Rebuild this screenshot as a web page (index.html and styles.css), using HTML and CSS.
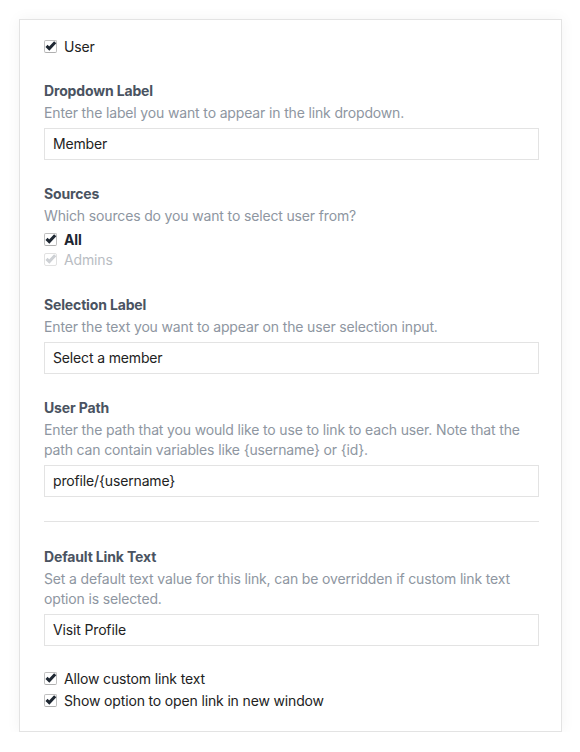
FILE: index.html
```html
<!DOCTYPE html>
<html>
<head>
<meta charset="utf-8">
<link rel="stylesheet" href="styles.css">
</head>
<body>
<div class="card">
  <label class="check top">
    <span class="box"><svg viewBox="0 0 13 13" width="13" height="13"><path d="M2.5 5.8 L5.3 8.5 L11.2 2.3" /></svg></span>
    <span>User</span>
  </label>

  <div class="field first">
    <div class="title">Dropdown Label</div>
    <div class="desc">Enter the label you want to appear in the link dropdown.</div>
    <div class="input">Member</div>
  </div>

  <div class="field">
    <div class="title">Sources</div>
    <div class="desc">Which sources do you want to select user from?</div>
    <div class="checks">
      <label class="check strong">
        <span class="box"><svg viewBox="0 0 13 13" width="13" height="13"><path d="M2.5 5.8 L5.3 8.5 L11.2 2.3" /></svg></span>
        <span>All</span>
      </label>
      <label class="check disabled">
        <span class="box"><svg viewBox="0 0 13 13" width="13" height="13"><path d="M2.5 5.8 L5.3 8.5 L11.2 2.3" /></svg></span>
        <span>Admins</span>
      </label>
    </div>
  </div>

  <div class="field after-checks">
    <div class="title">Selection Label</div>
    <div class="desc">Enter the text you want to appear on the user selection input.</div>
    <div class="input">Select a member</div>
  </div>

  <div class="field">
    <div class="title">User Path</div>
    <div class="desc">Enter the path that you would like to use to link to each user. Note that the path can contain variables like {username} or {id}.</div>
    <div class="input">profile/{username}</div>
  </div>

  <hr class="sep">

  <div class="field after-sep">
    <div class="title">Default Link Text</div>
    <div class="desc">Set a default text value for this link, can be overridden if custom link text option is selected.</div>
    <div class="input">Visit Profile</div>
  </div>

  <div class="options">
    <label class="check">
      <span class="box"><svg viewBox="0 0 13 13" width="13" height="13"><path d="M2.5 5.8 L5.3 8.5 L11.2 2.3" /></svg></span>
      <span>Allow custom link text</span>
    </label>
    <label class="check">
      <span class="box"><svg viewBox="0 0 13 13" width="13" height="13"><path d="M2.5 5.8 L5.3 8.5 L11.2 2.3" /></svg></span>
      <span>Show option to open link in new window</span>
    </label>
  </div>
</div>
</body>
</html>
```

FILE: styles.css
```css
html, body {
  margin: 0;
  padding: 0;
  background: #ffffff;
}
body {
  font-family: Inter, "Helvetica Neue", "Liberation Sans", sans-serif;
  font-size: 14px;
  letter-spacing: -0.15px;
  color: #222;
}
.card {
  box-sizing: border-box;
  width: 543px;
  margin: 19px 0 0 19px;
  border: 1px solid #e3e3e3;
  box-shadow: 0 0 14px rgba(0, 0, 0, 0.05);
  padding: 16px 22px 19px 24px;
  background: #fff;
}
.check {
  display: flex;
  align-items: center;
  gap: 7px;
  line-height: 22px;
  height: 22px;
}
.checks .check {
  height: 20px;
  line-height: 20px;
}
.box {
  position: relative;
  box-sizing: border-box;
  width: 13px;
  height: 13px;
  margin-top: -2px;
  border: 1px solid #c0c0c0;
  border-bottom-color: #b0b0b0;
  border-radius: 2px;
  background: #fff;
  flex: none;
}
.box svg {
  position: absolute;
  left: -1px;
  top: -1px;
}
.box path {
  fill: none;
  stroke: #1f2833;
  stroke-width: 3;
  stroke-linecap: butt;
  stroke-linejoin: miter;
}
.strong span:last-child {
  font-weight: 700;
  color: #1c2530;
}
.disabled {
  color: #b9bdc3;
}
.disabled .box {
  border-color: #e2e2e2;
}
.disabled .box path {
  stroke: #cdd0d4;
}
.field {
  margin-top: 23px;
}
.field.first {
  margin-top: 22px;
}
.field.after-checks {
  margin-top: 24px;
}
.title {
  font-weight: 700;
  color: #4a5361;
  line-height: 22px;
  margin-bottom: 1px;
}
.desc {
  color: #8e96a1;
  line-height: 20px;
}
.input {
  margin-top: 5px;
  box-sizing: border-box;
  height: 32px;
  border: 1px solid #e3e3e3;
  padding: 0 8px;
  line-height: 30px;
  color: #222;
}
.checks {
  margin-top: 4px;
}
.sep {
  border: 0;
  border-top: 1px solid #e3e3e3;
  margin: 24px 0 0 0;
  height: 0;
}
.field.after-sep {
  margin-top: 24px;
}
.options {
  margin-top: 22px;
}
```
